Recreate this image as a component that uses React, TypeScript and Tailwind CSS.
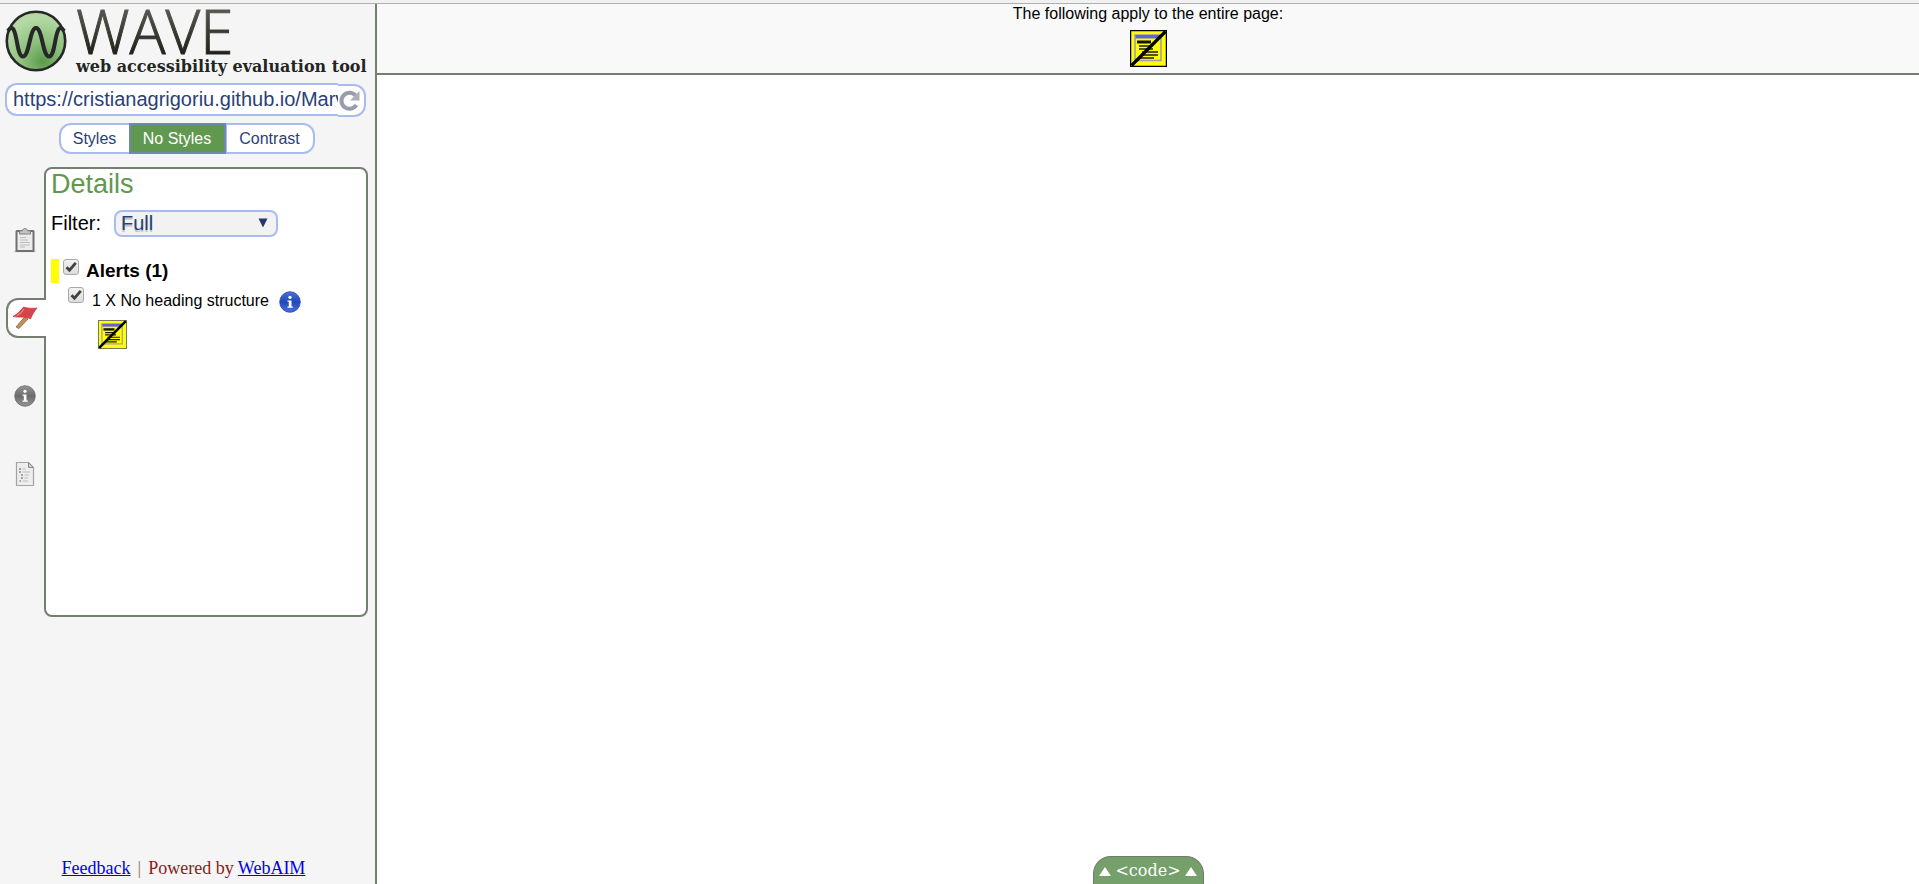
import { useState } from "react";

function WaveMark() {
  return (
    <svg className="mt-[5px] size-[62px] shrink-0" viewBox="0 0 62 62" aria-hidden="true">
      <defs>
        <radialGradient id="orb" cx="0.62" cy="0.85" r="0.75">
          <stop offset="0" stopColor="#5c9a4c" />
          <stop offset="0.45" stopColor="#8cbf7c" />
          <stop offset="1" stopColor="#b4d9a5" />
        </radialGradient>
      </defs>
      <circle cx="31" cy="31" r="29.2" fill="url(#orb)" stroke="#272727" strokeWidth="2.6" />
      <path
        d="M3 21C5 17.500 7.500 17 9 20.500C12.500 28 12.500 46.500 18 46.500C24.500 46.500 24.500 18 31 18C37.500 18 37.500 46.500 44 46.500C49.500 46.500 49.500 28 53 20.500C54.500 17 57 17.500 59 21"
        fill="none"
        stroke="#272727"
        strokeWidth="4"
      />
    </svg>
  );
}

function NoHeadingIcon({ className, edge }: { className: string; edge: string }) {
  return (
    <svg className={className} viewBox="0 0 37 37" aria-hidden="true">
      <rect x="0.500" y="0.500" width="36" height="36" fill="#ffff00" stroke={edge} strokeWidth="1.500" />
      <rect x="5" y="5" width="26" height="25.500" fill="none" stroke="#a09fb0" strokeWidth="1.600" />
      <rect x="5.500" y="5" width="25" height="3.500" fill="#6262e0" />
      <path d="M7 12H21" stroke="#111" strokeWidth="3" />
      <path d="M9 16H23M9 19H23M12 22H28M12 25H28M9 28H24" stroke="#1c1c1c" strokeWidth="1.500" />
      <path d="M1.500 35.500L35.500 1.500" stroke="#000" strokeWidth="3.200" />
    </svg>
  );
}

function InfoIcon({ id, light, dark, className }: { id: string; light: string; dark: string; className: string }) {
  return (
    <svg className={className} viewBox="0 0 22 22" aria-hidden="true">
      <defs>
        <linearGradient id={id} x1="0" y1="0" x2="0" y2="1">
          <stop offset="0" stopColor={light} />
          <stop offset="0.5" stopColor={dark} />
          <stop offset="1" stopColor={light} />
        </linearGradient>
      </defs>
      <circle cx="11" cy="11" r="10.300" fill={`url(#${id})`} stroke={dark} strokeWidth="0.800" />
      <circle cx="11" cy="6.300" r="1.600" fill="#fff" />
      <path d="M8.500 9.500H12.500V15.500H13.800V16.800H8.500V15.500H9.800V10.800H8.500Z" fill="#fff" />
    </svg>
  );
}

function ClipboardIcon() {
  return (
    <svg className="h-[26px] w-[22px]" viewBox="0 0 22 26" aria-hidden="true">
      <path d="M0.500 24.500H21.500" stroke="#aaa" strokeWidth="1.200" />
      <rect x="2.500" y="4" width="17" height="20" rx="0.500" fill="#ececec" stroke="#707070" strokeWidth="2" />
      <path d="M5.500 7V3.800H8.500C8.500 0.800 13.500 0.800 13.500 3.800H16.500V7Z" fill="#c4c4c4" stroke="#777" strokeWidth="0.900" />
      <path d="M6 10.500H12M6 13H14M6 15.500H16M6 18H16M6 20H11" stroke="#bcbcbc" strokeWidth="1" />
    </svg>
  );
}

function FlagIcon() {
  return (
    <svg className="size-[26px]" viewBox="0 0 26 26" aria-hidden="true">
      <path d="M12.500 12L16 14L7 23.500L4 22Z" fill="#c1905a" stroke="#8b633a" strokeWidth="0.800" />
      <path
        d="M11.500 2C15.500 3.500 20 3.600 25 3C23 5.500 20.500 9 18.500 14C14 11 7.500 13 1 11.500C5.500 9 8.500 6 11.500 2Z"
        fill="#d9434b"
        stroke="#c5303a"
        strokeWidth="0.700"
      />
      <path d="M12 4C10.500 6.500 8 9 5 10.600" fill="none" stroke="#ea858a" strokeWidth="1.200" />
    </svg>
  );
}

function OutlineIcon() {
  return (
    <svg className="h-[26px] w-[20px]" viewBox="0 0 20 26" aria-hidden="true">
      <path d="M1.500 1.500H13.500L18.500 6.500V24.500H1.500Z" fill="#ededed" stroke="#a3a3a3" strokeWidth="1.200" />
      <path d="M13.500 1.500V6.500H18.500Z" fill="#ccc" stroke="#8d8d8d" strokeWidth="1" />
      <path d="M4 8H6M4 11H6M6 14H8M6 17H8M4.500 20H6" stroke="#888" strokeWidth="1.300" />
      <path d="M7.500 8H10.500M7.500 11H15M9.500 14H14M9.500 17H13M7.500 20H13" stroke="#bbb" strokeWidth="1.100" />
    </svg>
  );
}

function Check({ id, checked, onChange }: { id: string; checked: boolean; onChange: () => void }) {
  return (
    <span className="grid size-4 shrink-0 grid-cols-1">
      <input
        id={id}
        type="checkbox"
        checked={checked}
        onChange={onChange}
        className="col-start-1 row-start-1 size-4 appearance-none rounded-[3px] border border-[#a9a9a9] bg-linear-to-b from-[#f2f2f2] to-[#dcdcdc]"
      />
      {checked && (
        <svg className="pointer-events-none col-start-1 row-start-1 size-4" viewBox="0 0 16 16" aria-hidden="true">
          <path d="M3.500 8.200L6.500 11.200L12.800 3.800" fill="none" stroke="#404040" strokeWidth="2.800" />
        </svg>
      )}
    </span>
  );
}

const tabs = [
  { name: "Summary", icon: <ClipboardIcon /> },
  { name: "Details", icon: <FlagIcon /> },
  { name: "Documentation", icon: <InfoIcon id="grayInfo" light="#969696" dark="#6b6b6b" className="size-[22px]" /> },
  { name: "Outline", icon: <OutlineIcon /> },
];

const views = [
  { name: "Styles", shape: "w-[72px] rounded-l-xl" },
  { name: "No Styles", shape: "-ml-0.5 w-[97px]" },
  { name: "Contrast", shape: "-ml-px w-[90px] rounded-r-xl" },
];

export default function App() {
  const [url, setUrl] = useState("https://cristianagrigoriu.github.io/Marvel/");
  const [tab, setTab] = useState("Details");
  const [view, setView] = useState("No Styles");
  const [group, setGroup] = useState(true);
  const [item, setItem] = useState(true);

  return (
    <div className="flex min-h-screen flex-col bg-white font-['Liberation_Sans',Arial,sans-serif] text-black">
      <div className="h-1 border-b border-[#b0b0b0] bg-[#f1f1f1]" />
      <div className="flex grow">
        <aside className="flex w-[377px] shrink-0 flex-col border-r-2 border-[#757f71] bg-[#f5f5f5]">
          <header className="flex h-[79px] gap-[9px] pt-px pl-[5px]">
            <WaveMark />
            <h1 className="flex flex-col whitespace-nowrap text-[#24251f]">
              <span className="bg-linear-to-b from-[#5c5d56] to-[#1c1d15] bg-clip-text font-['Open_Sans',sans-serif] text-[60px] leading-[53px] font-light text-transparent [-webkit-text-stroke:1px_transparent]">
                WAVE
              </span>
              <span className="font-['DejaVu_Serif',serif] text-base leading-[18px] font-bold">
                web accessibility evaluation tool
              </span>
            </h1>
          </header>

          <form className="flex pr-[9px] pl-[5px]" onSubmit={(e) => e.preventDefault()}>
            <input
              aria-label="Web page address"
              value={url}
              onChange={(e) => setUrl(e.target.value)}
              className="h-[33px] min-w-0 grow rounded-l-xl border-2 border-r-0 border-[#a9bcef] bg-white pl-1.5 text-xl text-[#2b4077] outline-none"
            />
            <button
              aria-label="Reload"
              className="mt-px flex h-[33px] w-7 items-center rounded-r-xl border-2 border-l-0 border-[#a9bcef] bg-white"
            >
              <svg className="size-[22px]" viewBox="0 0 22 22" aria-hidden="true">
                <path d="M17.500 5.500A8 8 0 1 0 18.300 15" fill="none" stroke="#979daa" strokeWidth="4" />
                <path d="M21.500 1V10.500H12Z" fill="#a9b0b8" />
              </svg>
            </button>
          </form>

          <div className="mt-1.5 flex justify-center pr-0.5" role="group" aria-label="Page view">
            {views.map((v) => (
              <button
                key={v.name}
                aria-pressed={view === v.name}
                onClick={() => setView(v.name)}
                className={`h-[31px] border-2 text-base ${v.shape} ${
                  view === v.name
                    ? "z-10 border-[#6f87b4] bg-[#61984f] text-white"
                    : "border-[#a9bcef] bg-white text-[#2b4077]"
                }`}
              >
                {v.name}
              </button>
            ))}
          </div>

          <div className="mt-[13px] flex pr-[7px]">
            <nav className="flex w-[46px] shrink-0 flex-col gap-[38px] pt-[53px] pl-1.5" aria-label="Panels">
              {tabs.map((t) => (
                <button
                  key={t.name}
                  aria-label={t.name}
                  onClick={() => setTab(t.name)}
                  className={`flex h-10 items-center rounded-l-xl border-2 border-r-0 pl-1 ${
                    tab === t.name ? "z-10 border-[#757f71] bg-white" : "border-transparent"
                  }`}
                >
                  <span className="flex w-[26px] justify-center">{t.icon}</span>
                </button>
              ))}
            </nav>
            <section className="-ml-0.5 h-[450px] grow rounded-lg border-2 border-[#757f71] bg-white pl-[5px]">
              <h2 className="text-[27px] leading-[30px] text-[#61984f]">Details</h2>
              <div className="mt-2.5 flex items-center text-xl">
                <label htmlFor="filter">Filter:</label>
                <div className="ml-[13px] grid">
                  <select
                    id="filter"
                    className="col-start-1 row-start-1 h-[27px] w-[164px] appearance-none rounded-lg border-2 border-[#a9bcef] bg-[#f2f2f2] pl-[5px] text-xl leading-5 text-[#2b4077] text-shadow-[0_2px_1px_#bbb]"
                  >
                    <option>Full</option>
                    <option>WCAG</option>
                  </select>
                  <svg
                    className="pointer-events-none col-start-1 row-start-1 mr-2.5 size-2.5 self-center justify-self-end"
                    viewBox="0 0 10 10"
                    aria-hidden="true"
                  >
                    <path d="M0.500 0.500H9.500L5 9.500Z" fill="#24386f" />
                  </svg>
                </div>
              </div>

              <div className="mt-[22px] flex h-6 gap-1 border-l-8 border-[#ffff00] pl-1">
                <Check id="alerts" checked={group} onChange={() => setGroup(!group)} />
                <h3 className="ml-[3px] text-[19px] leading-6 font-bold">
                  <label htmlFor="alerts">Alerts (1)</label>
                </h3>
              </div>
              <div className="mt-1 flex pl-[17px]">
                <Check id="heading" checked={item} onChange={() => setItem(!item)} />
                <label htmlFor="heading" className="ml-2 text-base leading-7">
                  1 X No heading structure
                </label>
                <button aria-label="Icon documentation" className="mt-1 ml-2.5 size-[22px]">
                  <InfoIcon id="blueInfo" light="#4a70e0" dark="#2447b8" className="size-[22px]" />
                </button>
              </div>
              <button aria-label="Show no heading structure" className="mt-[5px] ml-[47px] block">
                <NoHeadingIcon className="size-[29px]" edge="#77775a" />
              </button>
            </section>
          </div>

          <footer className="mt-auto pr-2 pb-1 text-center font-['Liberation_Serif',serif] text-lg leading-6 text-[#8b1a1a]">
            <a href="#feedback" className="text-[#0000ee] underline">Feedback</a>
            <span className="mx-[7px] text-[#8a7373]">|</span>
            {"Powered by "}
            <a href="#webaim" className="text-[#0000ee] underline">WebAIM</a>
          </footer>
        </aside>

        <main className="flex min-w-0 grow flex-col">
          <div className="flex h-[71px] flex-col items-center border-b-2 border-[#757f71] bg-[#f9f9f9]">
            <p className="text-base leading-5">The following apply to the entire page:</p>
            <button aria-label="No heading structure" className="mt-1.5">
              <NoHeadingIcon className="size-[37px]" edge="#000" />
            </button>
          </div>
          <button
            aria-label="Show code panel"
            className="mt-auto flex h-7 w-[111px] items-center justify-center gap-1 self-center rounded-t-[18px] border border-b-0 border-[#6f7a6b] bg-[#759f6b] font-['DejaVu_Serif',serif] text-base text-white"
          >
            <svg className="size-3 shrink-0" viewBox="0 0 12 12" aria-hidden="true">
              <path d="M6 2L12 11H0Z" fill="#fff" />
            </svg>
            <span>&lt;code&gt;</span>
            <svg className="size-3 shrink-0" viewBox="0 0 12 12" aria-hidden="true">
              <path d="M6 2L12 11H0Z" fill="#fff" />
            </svg>
          </button>
        </main>
      </div>
    </div>
  );
}
